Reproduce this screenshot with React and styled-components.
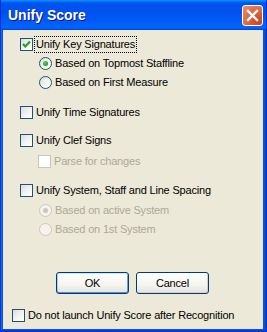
import React from 'react';
import styled, { createGlobalStyle } from 'styled-components';

const GlobalStyle = createGlobalStyle`
  html, body {
    margin: 0;
    padding: 0;
  }
  body {
    background: #ECE9D8;
    font-family: 'Liberation Sans', Arial, sans-serif;
  }
`;

function Check({ checked, disabled }) {
  return (
    <Box $disabled={disabled}>
      {checked && (
        <svg width="11" height="11" viewBox="0 0 11 11">
          <path d="M2 5 L4.3 7.4 L9 2.6" fill="none" stroke="#21A121" strokeWidth="2.2" />
        </svg>
      )}
    </Box>
  );
}

function Radio({ checked, disabled }) {
  return (
    <RadioCircle $disabled={disabled}>
      {checked && <Dot $disabled={disabled} />}
    </RadioCircle>
  );
}

function App() {
  return (
    <>
      <GlobalStyle />
      <Frame>
        <TitleBar>
          <Title>Unify Score</Title>
          <CloseButton>
            <svg width="21" height="21" viewBox="0 0 21 21">
              <path d="M6 6 L15 15 M15 6 L6 15" stroke="#fff" strokeWidth="2.4" strokeLinecap="square" />
            </svg>
          </CloseButton>
        </TitleBar>
        <Body>
          <Row $top={5} $indent={17}>
            <Check checked />
            <Label $focus>Unify Key Signatures</Label>
          </Row>
          <Row $indent={36}>
            <Radio checked />
            <Label>Based on Topmost Staffline</Label>
          </Row>
          <Row $indent={36}>
            <Radio />
            <Label>Based on First Measure</Label>
          </Row>

          <Row $top={11} $indent={17}>
            <Check />
            <Label>Unify Time Signatures</Label>
          </Row>

          <Row $top={9} $indent={17}>
            <Check />
            <Label>Unify Clef Signs</Label>
          </Row>
          <Row $top={2} $indent={35}>
            <Check disabled />
            <Label $disabled>Parse for changes</Label>
          </Row>

          <Row $top={10} $indent={17}>
            <Check />
            <Label>Unify System, Staff and Line Spacing</Label>
          </Row>
          <Row $top={1} $indent={36}>
            <Radio checked disabled />
            <Label $disabled>Based on active System</Label>
          </Row>
          <Row $indent={36}>
            <Radio disabled />
            <Label $disabled>Based on 1st System</Label>
          </Row>

          <ButtonRow>
            <Button $default>OK</Button>
            <Button>Cancel</Button>
          </ButtonRow>

          <Row $top={12} $indent={9}>
            <Check />
            <Label>Do not launch Unify Score after Recognition</Label>
          </Row>
        </Body>
      </Frame>
    </>
  );
}

const Frame = styled.div`
  width: 267px;
  height: 332px;
  box-sizing: border-box;
  display: flex;
  flex-direction: column;
  background: #0A50DE;
  border: 1px solid #0831D9;
  border-top: none;
  padding: 0 3px 2px 2px;
  box-shadow: inset -1px -1px 0 #0544C8, inset 1px 0 0 #166AEE;
`;

const TitleBar = styled.div`
  height: 30px;
  margin: 0 -3px 0 -2px;
  padding: 0 3px 0 7px;
  display: flex;
  align-items: center;
  justify-content: space-between;
  background: linear-gradient(
    to bottom,
    #0997FF 0%,
    #0053EE 10%,
    #0050EE 40%,
    #0062F8 85%,
    #0066FF 92%,
    #005BFF 95%,
    #003DD7 100%
  );
`;

const Title = styled.div`
  color: #fff;
  font-family: 'Liberation Sans', Arial, sans-serif;
  font-weight: bold;
  font-size: 14px;
  text-shadow: 1px 1px 0 #0F1089;
  margin-top: 0;
`;

const CloseButton = styled.div`
  width: 21px;
  height: 21px;
  box-sizing: border-box;
  border: 1px solid #fff;
  border-radius: 3px;
  margin-top: 1px;
  display: flex;
  align-items: center;
  justify-content: center;
  overflow: hidden;
  background: radial-gradient(circle at 85% 85%, #CC4621 0%, #D9552C 30%, #E27655 70%, #E8917A 100%);

  svg {
    flex: none;
  }
`;

const Body = styled.div`
  flex: 1;
  background: #ECE9D8;
  display: flex;
  flex-direction: column;
  font-size: 11px;
  letter-spacing: -0.18px;
  color: #000;
`;

const Row = styled.div`
  height: 19px;
  display: flex;
  align-items: center;
  margin-top: ${(p) => p.$top || 0}px;
  padding-left: ${(p) => p.$indent}px;
`;

const Box = styled.div`
  width: 13px;
  height: 13px;
  box-sizing: border-box;
  flex: none;
  display: flex;
  align-items: center;
  justify-content: center;
  border: 1px solid ${(p) => (p.$disabled ? '#CAC8BB' : '#1C5180')};
  background: ${(p) =>
    p.$disabled ? '#fff' : 'linear-gradient(135deg, #DCDCD7 0%, #F3F3F1 55%, #fff 100%)'};
`;

const RadioCircle = styled.div`
  width: 13px;
  height: 13px;
  box-sizing: border-box;
  flex: none;
  border-radius: 50%;
  display: flex;
  align-items: center;
  justify-content: center;
  border: 1px solid ${(p) => (p.$disabled ? '#CAC8BB' : '#1C5180')};
  background: ${(p) =>
    p.$disabled ? '#F4F3EE' : 'linear-gradient(135deg, #DCDCD7 0%, #F3F3F1 55%, #fff 100%)'};
`;

const Dot = styled.div`
  width: 5px;
  height: 5px;
  border-radius: 50%;
  background: ${(p) =>
    p.$disabled ? '#CAC8BB' : 'radial-gradient(circle at 35% 35%, #55D551 0%, #21A121 70%, #1A8E1A 100%)'};
`;

const Label = styled.span`
  margin-left: 1px;
  padding: 1px;
  line-height: 13px;
  white-space: nowrap;
  border: 1px dotted ${(p) => (p.$focus ? '#000' : 'transparent')};
  color: ${(p) => (p.$disabled ? '#ACA899' : '#000')};
`;

const ButtonRow = styled.div`
  margin-top: 33px;
  display: flex;
  justify-content: center;
  gap: 7px;
  padding-right: 1px;
`;

const Button = styled.div`
  width: 73px;
  height: 22px;
  box-sizing: border-box;
  display: flex;
  align-items: center;
  justify-content: center;
  border: 1px solid #003C74;
  border-radius: 3px;
  font-size: 11px;
  background: linear-gradient(to bottom, #FFFFFF 0%, #F5F4EF 60%, #E3E2DB 100%);
  box-shadow: ${(p) =>
    p.$default
      ? 'inset 0 -1px 0 #5B87D9, inset 0 1px 0 #CEE7FF, inset -1px 0 0 #6F9AE5, inset 1px 0 0 #A9CAF7'
      : 'inset -1px -1px 0 #D6D0C5'};
`;

export default App;
